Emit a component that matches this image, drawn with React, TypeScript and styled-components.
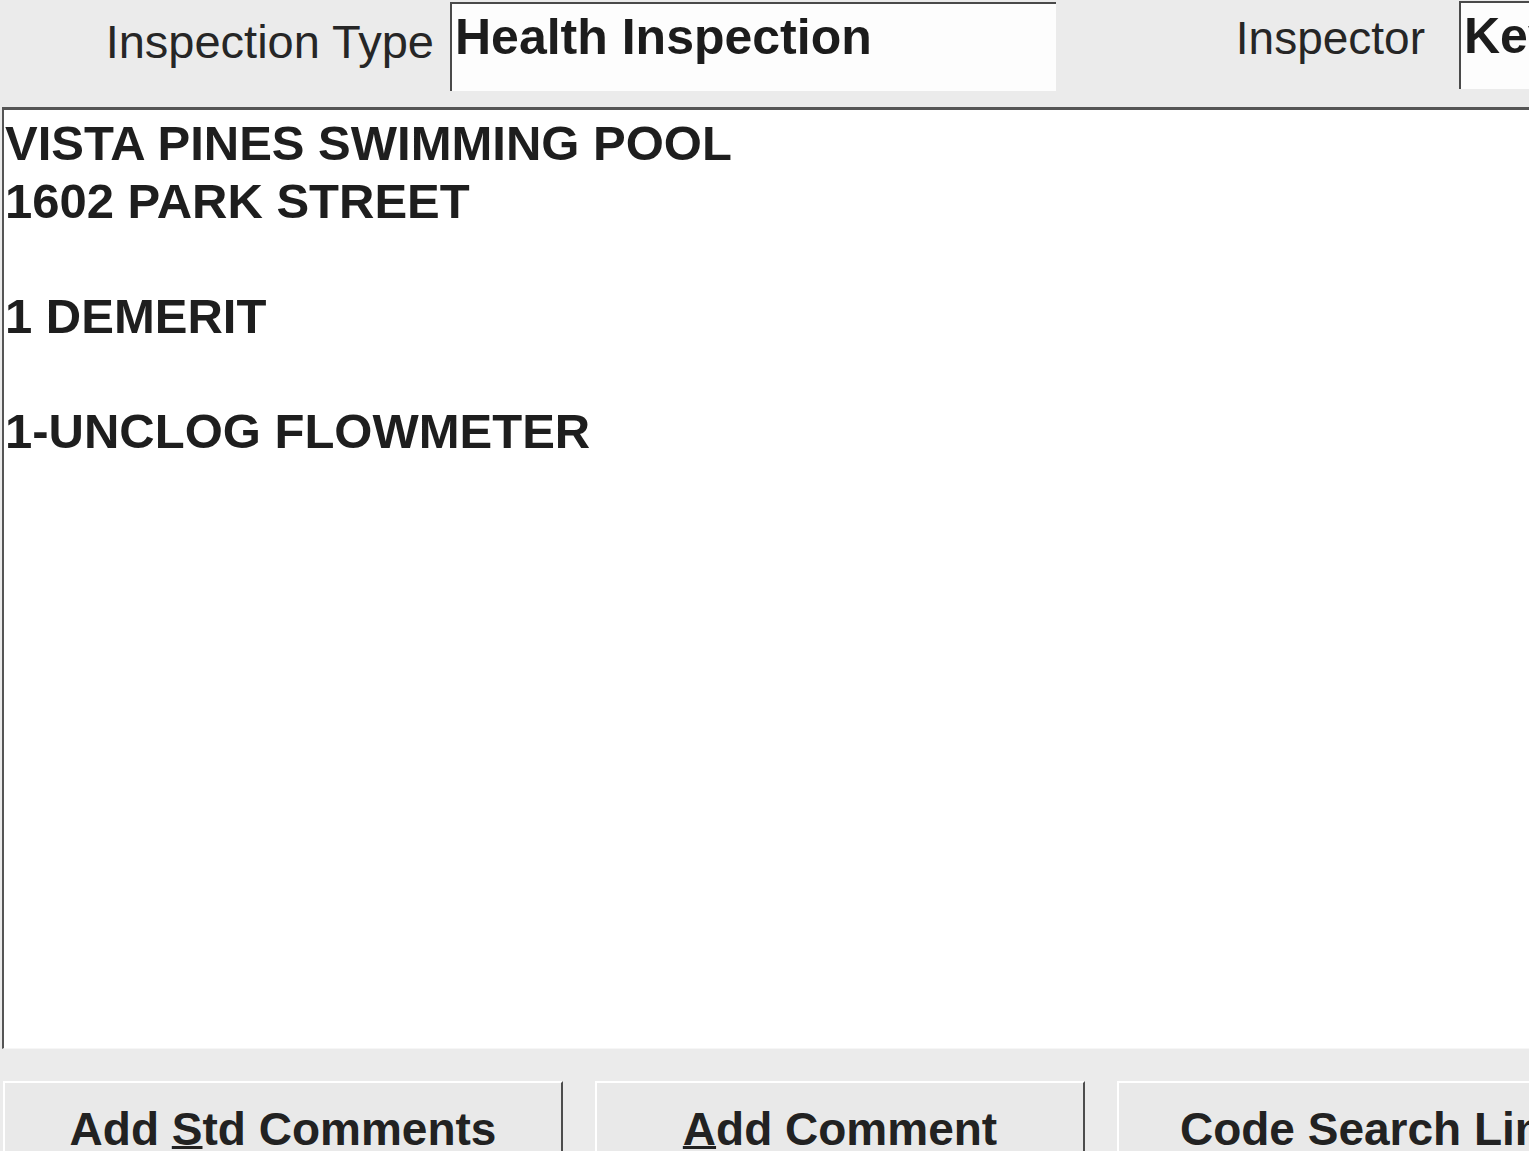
import React from 'react';
import styled, { createGlobalStyle } from 'styled-components';

const GlobalStyle = createGlobalStyle`
  html, body {
    margin: 0;
    padding: 0;
    background: #ebebeb;
  }
  body {
    font-family: 'Liberation Sans', Arial, sans-serif;
    color: #1f1f1f;
  }
`;

const Window = styled.div`
  width: 1529px;
  height: 1151px;
  overflow: hidden;
  background: #ebebeb;
  display: flex;
  flex-direction: column;
`;

const TopBar = styled.div`
  display: grid;
  grid-template-columns: 450px 606px 403px 300px;
  height: 107px;
  flex-shrink: 0;
`;

const Label = styled.div<{ $top: number; $pad: number; $size: number }>`
  font-size: ${p => p.$size}px;
  line-height: 1.149;
  color: #262626;
  text-align: right;
  white-space: nowrap;
  overflow: hidden;
  padding-top: ${p => p.$top}px;
  padding-right: ${p => p.$pad}px;
`;

const Field = styled.div<{ $top: number; $height: number }>`
  box-sizing: border-box;
  margin-top: ${p => p.$top}px;
  height: ${p => p.$height}px;
  background: #fdfdfd;
  border-top: 2px solid #4a4a4a;
  border-left: 2px solid #4a4a4a;
  padding: 5px 0 0 3px;
  font-size: 50px;
  font-weight: bold;
  line-height: 1.149;
  color: #1c1c1c;
  white-space: nowrap;
  overflow: hidden;
`;

const Memo = styled.div`
  box-sizing: border-box;
  margin-left: 2px;
  height: 942px;
  flex-shrink: 0;
  background: #ffffff;
  border-top: 3px solid #555;
  border-left: 2px solid #555;
  border-bottom: 1px solid #f6f6f6;
  padding: 5px 0 0 1px;
  font-size: 49px;
  font-weight: bold;
  line-height: 57.5px;
  color: #1e1e1e;
`;

const MemoLine = styled.div`
  min-height: 57.5px;
  white-space: nowrap;
`;

const ButtonRow = styled.div`
  display: flex;
  gap: 32px;
  margin-top: 32px;
  padding-left: 3px;
`;

const Button = styled.div<{ $width: number }>`
  box-sizing: border-box;
  flex-shrink: 0;
  width: ${p => p.$width}px;
  height: 90px;
  background: #e9e9e9;
  border-top: 2px solid #ffffff;
  border-left: 2px solid #ffffff;
  border-right: 2px solid #4d4d4d;
  padding-top: 20px;
  text-align: center;
  font-size: 46px;
  font-weight: bold;
  line-height: 1.149;
  color: #222;
  white-space: nowrap;

  u {
    text-decoration-thickness: 3px;
    text-underline-offset: 1px;
  }
`;

const memoLines = [
  'VISTA PINES SWIMMING POOL',
  '1602 PARK STREET',
  '',
  '1 DEMERIT',
  '',
  '1-UNCLOG FLOWMETER',
];

export default function App() {
  return (
    <Window>
      <GlobalStyle />
      <TopBar>
        <Label $top={15} $pad={16} $size={47}>Inspection Type</Label>
        <Field $top={2} $height={89}>Health Inspection</Field>
        <Label $top={12} $pad={34} $size={46}>Inspector</Label>
        <Field $top={1} $height={88}>Kevin</Field>
      </TopBar>
      <Memo>
        {memoLines.map((line, i) => (
          <MemoLine key={i}>{line}</MemoLine>
        ))}
      </Memo>
      <ButtonRow>
        <Button $width={560}>
          Add <u>S</u>td Comments
        </Button>
        <Button $width={490}>
          <u>A</u>dd Comment
        </Button>
        <Button $width={540}>Code Search Lines</Button>
      </ButtonRow>
    </Window>
  );
}
